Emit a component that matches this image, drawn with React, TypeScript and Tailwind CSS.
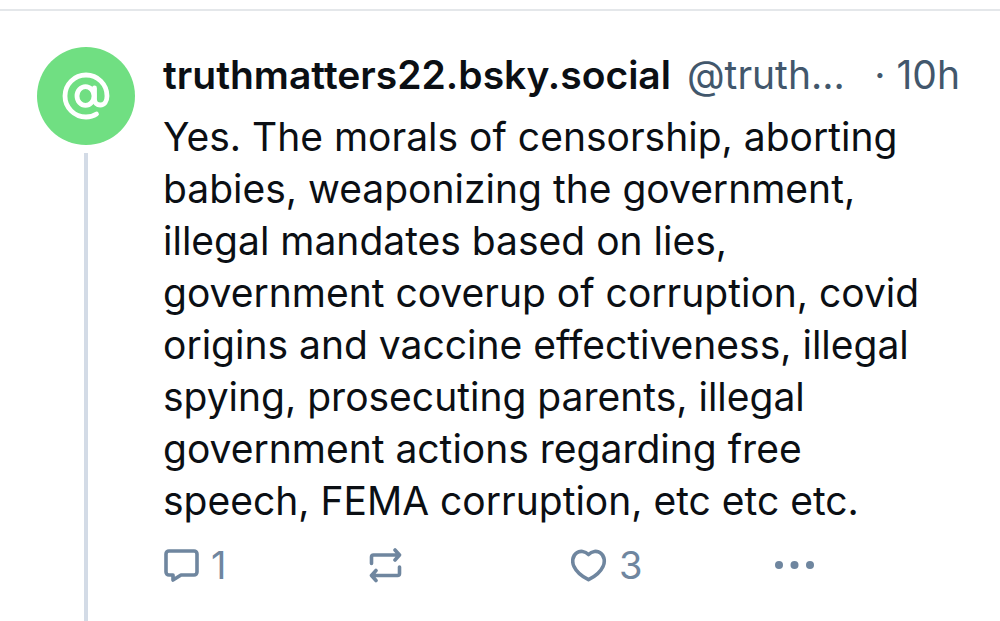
import type { ReactNode } from "react";

const POST = {
  name: "truthmatters22.bsky.social",
  handle: "@truth...",
  age: "10h",
  text: "Yes. The morals of censorship, aborting babies, weaponizing the government, illegal mandates based on lies, government coverup of corruption, covid origins and vaccine effectiveness, illegal spying, prosecuting parents, illegal government actions regarding free speech, FEMA corruption, etc etc etc.",
};

function Action({ label, count, children }: { label: string; count?: number; children: ReactNode }) {
  return (
    <button type="button" aria-label={label} className="flex items-center gap-3 text-left text-[#6f869f]">
      {children}
      {count !== undefined && <span className="text-[38px] leading-9">{count}</span>}
    </button>
  );
}

export default function App() {
  return (
    <main className="bg-white pt-[9px] font-['Inter',sans-serif] text-[#0b0f14]">
      <article className="flex border-t-2 border-[#e4e7ea] pr-10 pl-[37px]">
        <div className="flex shrink-0 flex-col items-center pt-9">
          <svg viewBox="0 0 98 98" className="size-[98px]" fill="none" aria-hidden="true">
            <circle cx="49" cy="49" r="49" fill="#70df82" />
            <ellipse cx="48.5" cy="49" rx="8.5" ry="9.3" stroke="#fff" strokeWidth="4.8" />
            <path
              d="M57.5 41v11c0 4 2.5 6 5.8 6 4 0 6.7-3.5 6.7-9A21 21 0 1 0 49 70c4 0 7.5-1 10.5-3"
              stroke="#fff"
              strokeWidth="4.8"
              strokeLinecap="round"
            />
          </svg>
          <div className="mt-2 w-1 flex-1 bg-[#d3dbe6]" />
        </div>

        <div className="ml-7 min-w-0 flex-1 pt-11 pb-10">
          <header className="flex items-baseline text-[39px] leading-10 whitespace-nowrap">
            <h1 className="font-semibold">{POST.name}</h1>
            <span className="ml-4 text-[#42576c]">{POST.handle}</span>
            <span className="ml-auto text-[#42576c]">· {POST.age}</span>
          </header>
          <p className="mt-4 pr-7 text-[39px] leading-[52px]">{POST.text}</p>
          <div className="mt-5 grid grid-cols-[repeat(3,204px)_auto] justify-start">
            <Action label="Reply" count={1}>
              <svg viewBox="0 0 36 36" className="size-9" fill="none" stroke="currentColor" strokeWidth="3.6" strokeLinejoin="round" aria-hidden="true">
                <path d="M6 4h25a3 3 0 0 1 3 3v18a3 3 0 0 1-3 3H18l-8 5v-5H6a3 3 0 0 1-3-3V7a3 3 0 0 1 3-3z" />
              </svg>
            </Action>
            <Action label="Repost">
              <svg viewBox="0 0 36 36" className="size-9" fill="none" stroke="currentColor" strokeWidth="3.6" strokeLinecap="round" strokeLinejoin="round" aria-hidden="true">
                <path d="M28 3l4.5 5L28 13M32 8H6.5a2 2 0 0 0-2 2v6.500M9 23.500l-4.500 5 4.500 5M5 28.500h25.500a2 2 0 0 0 2-2V20" />
              </svg>
            </Action>
            <Action label="Like" count={3}>
              <svg viewBox="0 0 36 36" className="size-9" fill="none" stroke="currentColor" strokeWidth="3.6" strokeLinejoin="round" aria-hidden="true">
                <path d="M17.5 7.5C14 4 9 3.500 5.800 5.800C1 9 1 15.500 3 19.500C5.500 25 12 30 17.500 32.700C23 30 29.500 25 32 19.500C34 15.500 34 9 29.200 5.800C26 3.500 21 4 17.500 7.500z" />
              </svg>
            </Action>
            <Action label="More options">
              <svg viewBox="0 0 40 36" className="h-9 w-10" fill="currentColor" aria-hidden="true">
                <circle cx="4" cy="18" r="4" />
                <circle cx="19.5" cy="18" r="4" />
                <circle cx="35" cy="18" r="4" />
              </svg>
            </Action>
          </div>
        </div>
      </article>
    </main>
  );
}
